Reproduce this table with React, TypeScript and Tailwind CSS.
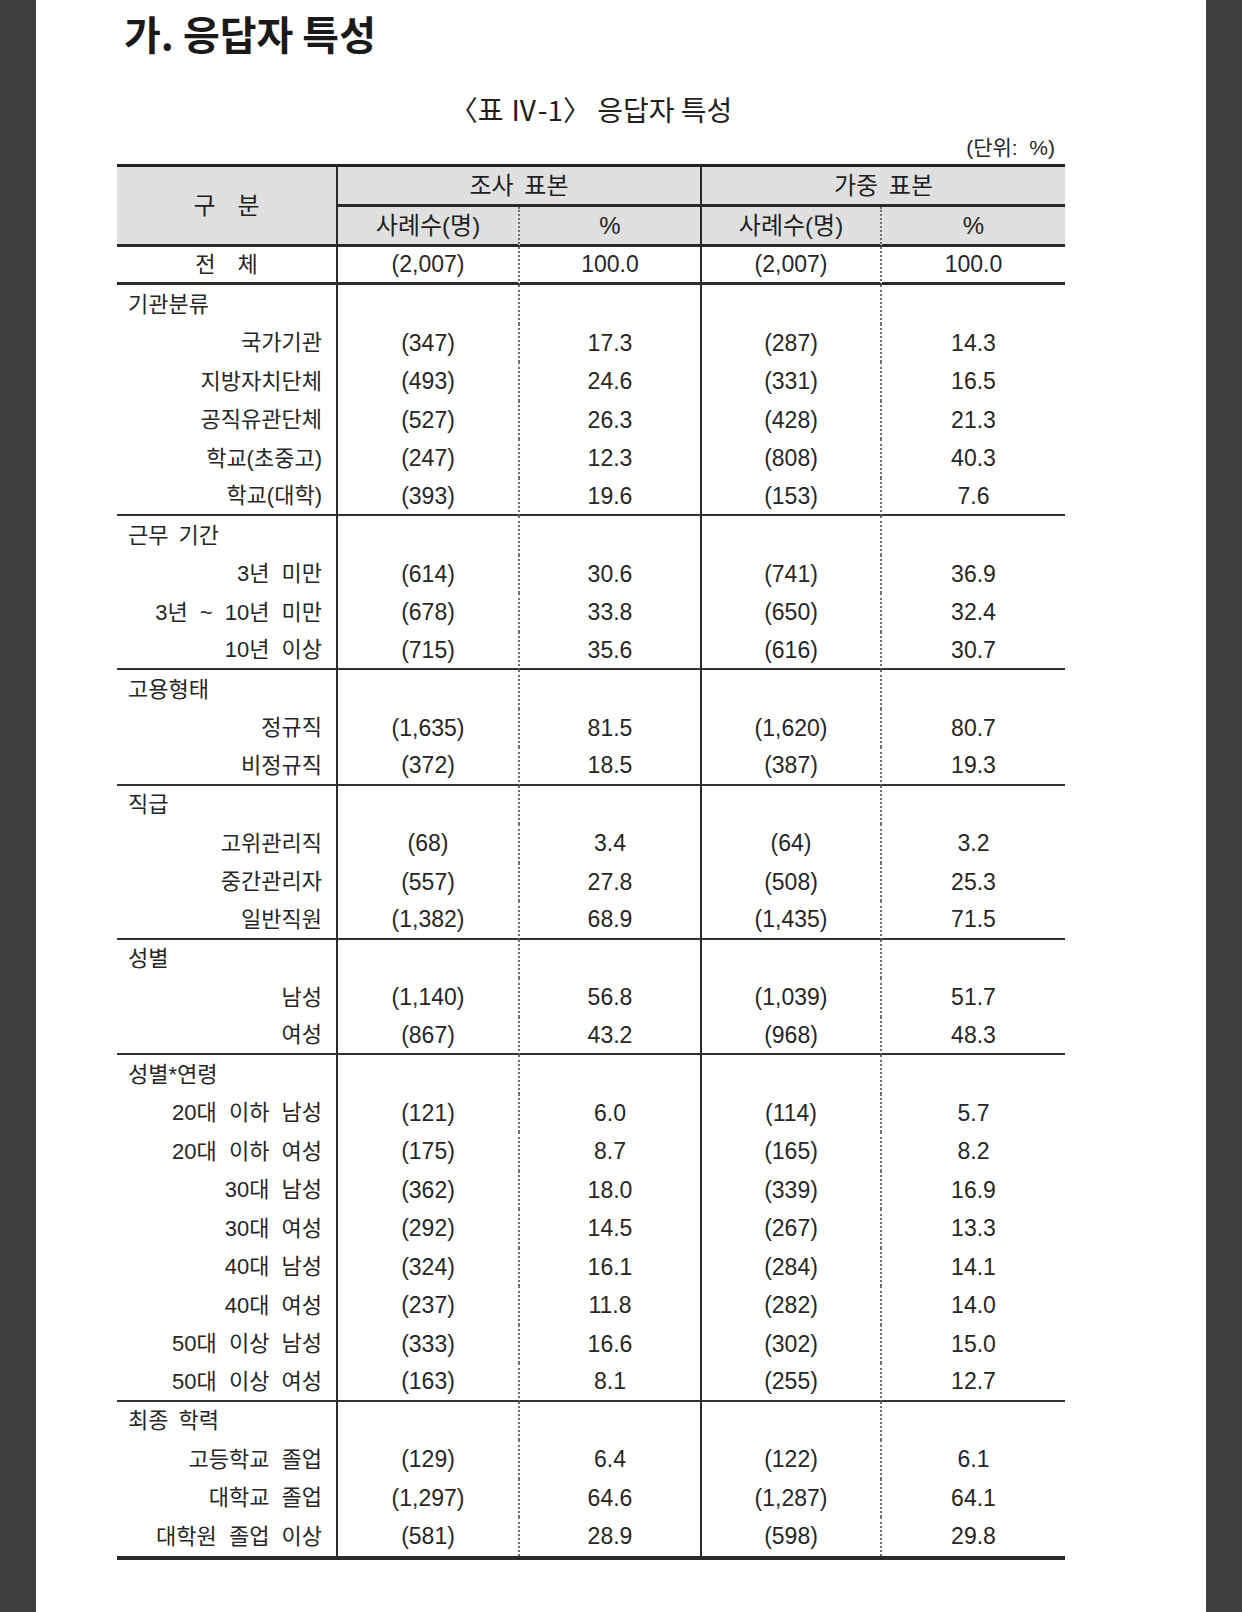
import React from "react";

type Row = [string, string, string, string, string];
const sections: { title: string; rows: Row[] }[] = [
  {
    title: "기관분류",
    rows: [
      ["국가기관", "(347)", "17.3", "(287)", "14.3"],
      ["지방자치단체", "(493)", "24.6", "(331)", "16.5"],
      ["공직유관단체", "(527)", "26.3", "(428)", "21.3"],
      ["학교(초중고)", "(247)", "12.3", "(808)", "40.3"],
      ["학교(대학)", "(393)", "19.6", "(153)", "7.6"],
    ],
  },
  {
    title: "근무 기간",
    rows: [
      ["3년 미만", "(614)", "30.6", "(741)", "36.9"],
      ["3년 ~ 10년 미만", "(678)", "33.8", "(650)", "32.4"],
      ["10년 이상", "(715)", "35.6", "(616)", "30.7"],
    ],
  },
  {
    title: "고용형태",
    rows: [
      ["정규직", "(1,635)", "81.5", "(1,620)", "80.7"],
      ["비정규직", "(372)", "18.5", "(387)", "19.3"],
    ],
  },
  {
    title: "직급",
    rows: [
      ["고위관리직", "(68)", "3.4", "(64)", "3.2"],
      ["중간관리자", "(557)", "27.8", "(508)", "25.3"],
      ["일반직원", "(1,382)", "68.9", "(1,435)", "71.5"],
    ],
  },
  {
    title: "성별",
    rows: [
      ["남성", "(1,140)", "56.8", "(1,039)", "51.7"],
      ["여성", "(867)", "43.2", "(968)", "48.3"],
    ],
  },
  {
    title: "성별*연령",
    rows: [
      ["20대 이하 남성", "(121)", "6.0", "(114)", "5.7"],
      ["20대 이하 여성", "(175)", "8.7", "(165)", "8.2"],
      ["30대 남성", "(362)", "18.0", "(339)", "16.9"],
      ["30대 여성", "(292)", "14.5", "(267)", "13.3"],
      ["40대 남성", "(324)", "16.1", "(284)", "14.1"],
      ["40대 여성", "(237)", "11.8", "(282)", "14.0"],
      ["50대 이상 남성", "(333)", "16.6", "(302)", "15.0"],
      ["50대 이상 여성", "(163)", "8.1", "(255)", "12.7"],
    ],
  },
  {
    title: "최종 학력",
    rows: [
      ["고등학교 졸업", "(129)", "6.4", "(122)", "6.1"],
      ["대학교 졸업", "(1,297)", "64.6", "(1,287)", "64.1"],
      ["대학원 졸업 이상", "(581)", "28.9", "(598)", "29.8"],
    ],
  },
];

const GRID = "grid grid-cols-[221px_182px_182px_180px_183px]";
const C1 = "border-r-2 border-r-[#2a2a2a]";
const C2 = "border-r-2 [border-right-style:dotted] border-r-[#6f6f6f]";
const C3 = "border-r-2 border-r-[#2a2a2a]";
const C4 = "border-r-2 [border-right-style:dotted] border-r-[#6f6f6f]";

function DataRow({ r, last }: { r: Row; last: boolean }) {
  const b = last ? "border-b-2 border-b-[#333]" : "";
  return (
    <div className={`${GRID} h-[38.5px]`}>
      <div className={`${C1} ${b} flex items-center justify-end pr-[14px] text-[22px] whitespace-pre [word-spacing:6px]`}>
        {r[0]}
      </div>
      <div className={`${C2} ${b} flex items-center justify-center text-[23px]`}>{r[1]}</div>
      <div className={`${C3} ${b} flex items-center justify-center text-[23px]`}>{r[2]}</div>
      <div className={`${C4} ${b} flex items-center justify-center text-[23px]`}>{r[3]}</div>
      <div className={`${b} flex items-center justify-center text-[23px]`}>{r[4]}</div>
    </div>
  );
}

function TitleRow({ t }: { t: string }) {
  return (
    <div className={`${GRID} h-[38.5px]`}>
      <div className={`${C1} flex items-center pl-[11px] text-[22px] whitespace-pre [word-spacing:4px]`}>{t}</div>
      <div className={C2} />
      <div className={C3} />
      <div className={C4} />
      <div />
    </div>
  );
}

export default function App() {
  return (
    <div className="min-h-[1612px] w-full bg-[#3f3f3f] flex">
      <div
        className="ml-[36px] w-[1170px] min-h-[1612px] bg-white text-[#262626]"
        style={{ fontFamily: '"Liberation Sans", "Noto Sans CJK KR", sans-serif' }}
      >
        <div
          className="pl-[88px] pt-[8px] text-[40px] font-bold leading-[50px] text-[#1a1a1a] whitespace-pre"
          style={{ fontFamily: '"Noto Sans CJK KR", sans-serif' }}
        >
          가. 응답자 특성
        </div>

        <div className="ml-[81px] w-[948px]">
          <div
            className="mt-[33px] text-center text-[28px] leading-[36px] whitespace-pre text-[#1f1f1f]"
            style={{ fontFamily: '"Noto Sans CJK KR", sans-serif' }}
          >
            〈표 Ⅳ-1〉 응답자 특성
          </div>
          <div className="mt-[7px] pr-[10px] text-right text-[21px] leading-[28px] whitespace-pre">(단위:  %)</div>

          <div className="mt-[2px] border-t-[3px] border-t-[#222]">
            {/* header */}
            <div className={`${GRID} grid-rows-[40px_40px] bg-[#e0e0e0] text-[24px] text-[#1f1f1f]`}>
              <div className={`${C1} row-span-2 border-b-[3px] border-b-[#2a2a2a] flex items-center justify-center gap-[22px]`}>
                <span>구</span>
                <span>분</span>
              </div>
              <div className={`${C3} col-span-2 border-b-[3px] border-b-[#2a2a2a] flex items-center justify-center whitespace-pre [word-spacing:4px]`}>
                조사 표본
              </div>
              <div className="col-span-2 border-b-[3px] border-b-[#2a2a2a] flex items-center justify-center whitespace-pre [word-spacing:4px]">
                가중 표본
              </div>
              <div className={`${C2} border-b-[3px] border-b-[#2a2a2a] flex items-center justify-center`}>사례수(명)</div>
              <div className={`${C3} border-b-[3px] border-b-[#2a2a2a] flex items-center justify-center`}>%</div>
              <div className={`${C4} border-b-[3px] border-b-[#2a2a2a] flex items-center justify-center`}>사례수(명)</div>
              <div className="border-b-[3px] border-b-[#2a2a2a] flex items-center justify-center">%</div>
            </div>

            {/* total */}
            <div className={`${GRID} h-[38px] text-[23px]`}>
              <div className={`${C1} border-b-[3px] border-b-[#2a2a2a] flex items-center justify-center gap-[22px] text-[22px]`}>
                <span>전</span>
                <span>체</span>
              </div>
              <div className={`${C2} border-b-[3px] border-b-[#2a2a2a] flex items-center justify-center`}>(2,007)</div>
              <div className={`${C3} border-b-[3px] border-b-[#2a2a2a] flex items-center justify-center`}>100.0</div>
              <div className={`${C4} border-b-[3px] border-b-[#2a2a2a] flex items-center justify-center`}>(2,007)</div>
              <div className="border-b-[3px] border-b-[#2a2a2a] flex items-center justify-center">100.0</div>
            </div>

            {sections.map((s, si) => (
              <div key={s.title}>
                <TitleRow t={s.title} />
                {s.rows.map((r, i) => (
                  <DataRow key={r[0]} r={r} last={i === s.rows.length - 1 && si !== sections.length - 1} />
                ))}
              </div>
            ))}
            <div className="h-[4px] bg-[#2a2a2a]" />
          </div>
        </div>
      </div>
    </div>
  );
}
